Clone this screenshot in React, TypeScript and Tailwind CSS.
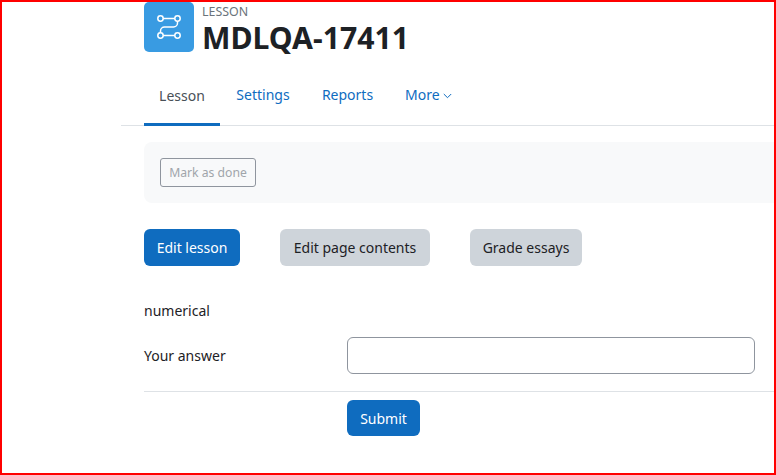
export default function App() {
  const font = { fontFamily: '"Noto Sans", sans-serif' };
  return (
    <div style={font} className="w-[776px] h-[475px] border-2 border-[#ff0000] bg-white overflow-hidden text-[#1d2125] text-[14px] box-border">
      <div className="pl-[142px] flex items-start gap-2">
        <div className="w-[50px] h-[50px] rounded-[5px] bg-[#399be2] flex items-center justify-center shrink-0">
          <svg width="24" height="24" viewBox="0 0 24 24" fill="none" stroke="white" strokeWidth="1.5">
            <circle cx="3.5" cy="3.5" r="2.7" />
            <circle cx="20.5" cy="3.5" r="2.7" />
            <circle cx="3.5" cy="20.5" r="2.7" />
            <circle cx="20.5" cy="20.5" r="2.7" />
            <path d="M6.2 3.5H17.8M20.5 6.2V8A4 4 0 0 1 16.5 12H7.5A4 4 0 0 0 3.5 16V17.8M6.2 20.5H17.8" />
          </svg>
        </div>
        <div className="flex flex-col">
          <div className="text-[12.4px] leading-[18px] mt-[1px] text-[#6a737b]">LESSON</div>
          <div className="text-[30.2px] leading-[34px] font-bold">MDLQA-17411</div>
        </div>
      </div>
      <div className="ml-[119px] mt-[13px] pl-[23px] flex border-b border-[#dee2e6] h-[58px] text-[14px]">
        <div className="w-[76px] flex items-center justify-center border-b-[3px] border-[#0f6cbf] h-[58px] pb-[1px] text-[#495057]">Lesson</div>
        <div className="w-[86px] flex items-center justify-center pb-[4px] text-[#0f6cbf]">Settings</div>
        <div className="w-[83px] flex items-center justify-center pb-[4px] text-[#0f6cbf]">Reports</div>
        <div className="flex items-center pl-[16px] pb-[4px] gap-[3px] text-[#0f6cbf]">
          More
          <svg width="9" height="6" viewBox="0 0 9 6" fill="none" stroke="#0f6cbf" strokeWidth="1" className="mt-[2px]"><path d="M0.8 1L4.5 4.7L8.2 1" /></svg>
        </div>
      </div>
      <div className="ml-[142px] mt-[16px] h-[61px] bg-[#f8f9fa] rounded-l-[8px] pl-[16px] flex items-center">
        <div className="h-[29px] w-[96px] border border-[#8f959e] rounded-[3px] flex items-center justify-center pt-[1px] text-[12.2px] text-[#a0a5aa]">Mark as done</div>
      </div>
      <div className="ml-[142px] mt-[26px] flex gap-[40px]">
        <div className="h-[37px] w-[96px] bg-[#0f6cbf] text-white rounded-[6px] flex items-center justify-center">Edit lesson</div>
        <div className="h-[37px] w-[150px] bg-[#ced4da] rounded-[6px] flex items-center justify-center">Edit page contents</div>
        <div className="h-[37px] w-[112px] bg-[#ced4da] rounded-[6px] flex items-center justify-center">Grade essays</div>
      </div>
      <div className="ml-[142px] mt-[35px] leading-[20px]">numerical</div>
      <div className="ml-[142px] mt-[16px] flex items-center">
        <div className="w-[203px]">Your answer</div>
        <div className="w-[408px] h-[37px] border border-[#8f959e] rounded-[6px] bg-white"></div>
      </div>
      <div className="ml-[142px] mt-[17px] border-t border-[#dee2e6] pt-[8px] pl-[203px]">
        <div className="h-[36px] w-[73px] bg-[#0f6cbf] text-white rounded-[6px] flex items-center justify-center">Submit</div>
      </div>
    </div>
  );
}
